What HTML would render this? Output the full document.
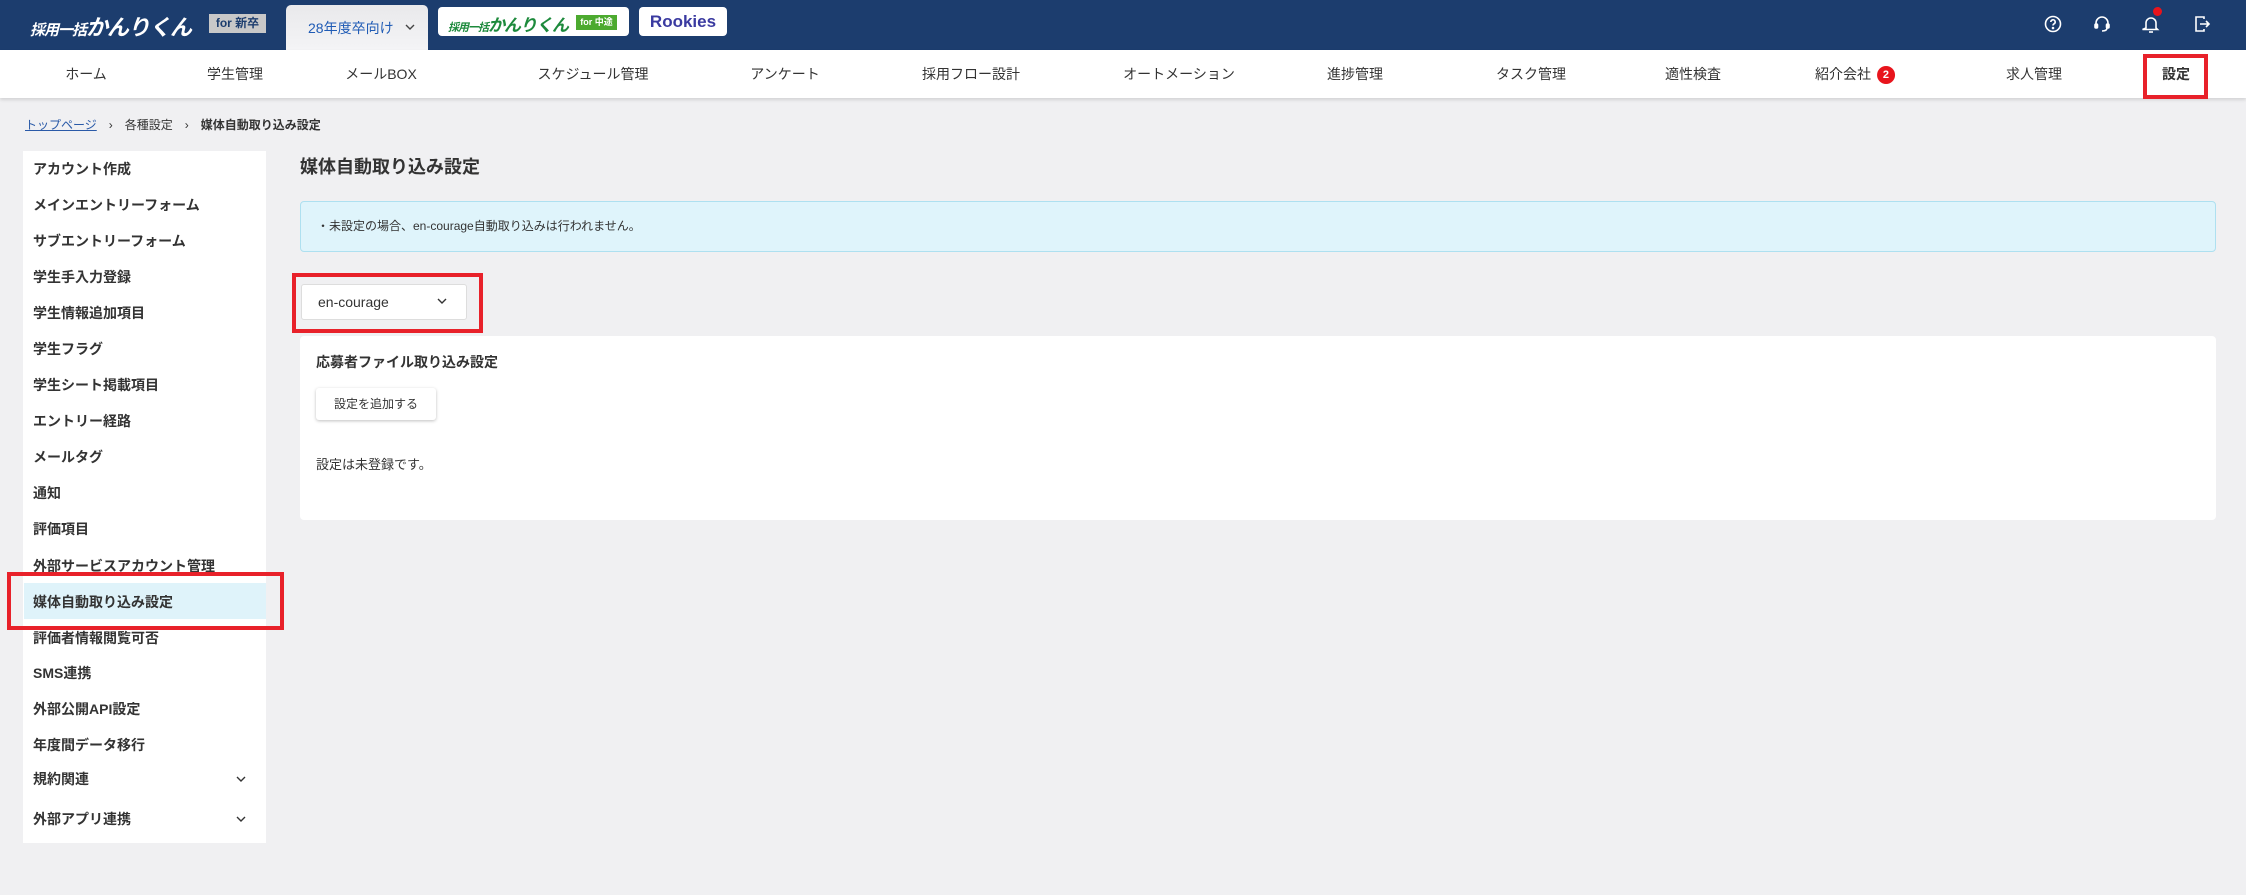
<!DOCTYPE html>
<html><head><meta charset="utf-8">
<style>
*{box-sizing:border-box;margin:0;padding:0}
body{width:2246px;height:895px;background:#f0f0f2;font-family:"Liberation Sans","Noto Sans CJK JP",sans-serif;color:#333;position:relative;overflow:hidden}
.a{position:absolute}
#hd{left:0;top:0;width:2246px;height:50px;background:#1c3d6e}
#nav{left:0;top:50px;width:2246px;height:48px;background:#fff;box-shadow:0 2px 3px rgba(0,0,0,.12)}
.ni{position:absolute;top:0;height:48px;line-height:48px;font-size:14px;color:#333;transform:translateX(-50%);white-space:nowrap}
.si{position:absolute;left:33px;font-size:14px;font-weight:bold;color:#333;transform:translateY(-50%);white-space:nowrap}
.red{position:absolute;border:4px solid #e8212a}
</style></head><body>
<div id="hd" class="a">
 <div class="a" style="left:30px;top:10px;font-size:22px;font-weight:bold;font-style:italic;color:#fff;letter-spacing:-1px;white-space:nowrap"><span style="font-size:15px">採用一括</span>かんりくん</div>
 <div class="a" style="left:209px;top:14px;width:57px;height:19px;background:#c8c8c8;color:#1c3d6e;font-size:12px;font-weight:bold;line-height:19px;text-align:center">for 新卒</div>
 <div class="a" style="left:286px;top:5px;width:142px;height:45px;background:linear-gradient(#e9e9eb,#f4f4f6);border-radius:5px 5px 0 0;color:#1f5bb5;font-size:14px;line-height:46px;padding-left:22px">28年度卒向け</div>
 <svg class="a" style="left:405px;top:24px" width="10" height="6" viewBox="0 0 10 6" fill="none" stroke="#444" stroke-width="1.4"><path d="M1 1l4 4 4-4"/></svg>
 <div class="a" style="left:438px;top:7px;width:191px;height:29px;background:#fff;border-radius:4px">
  <div class="a" style="left:10px;top:4px;font-size:17px;font-weight:bold;font-style:italic;color:#1d8a3c;white-space:nowrap;letter-spacing:-1px"><span style="font-size:11px">採用一括</span>かんりくん</div>
  <div class="a" style="left:138px;top:8px;width:41px;height:15px;background:#4caa2f;color:#fff;font-size:9px;font-weight:bold;text-align:center;line-height:15px">for 中途</div>
 </div>
 <div class="a" style="left:639px;top:7px;width:88px;height:29px;background:#fff;border-radius:4px;color:#3a3aa0;font-weight:bold;font-size:17px;text-align:center;line-height:29px">Rookies</div>
 <svg class="a" style="left:2044px;top:15px" width="18" height="18" viewBox="0 0 18 18" fill="none" stroke="#fff" stroke-width="1.6"><circle cx="9" cy="9" r="7.5"/><path d="M6.8 7a2.2 2.2 0 1 1 3 2c-.7.3-.8.8-.8 1.5"/><circle cx="9" cy="13" r=".5" fill="#fff"/></svg>
 <svg class="a" style="left:2093px;top:15px" width="18" height="18" viewBox="0 0 18 18" fill="none" stroke="#fff" stroke-width="1.6"><path d="M3 10V8a6 6 0 0 1 12 0v2"/><rect x="2" y="9" width="2.5" height="4" rx="1" fill="#fff"/><rect x="13.5" y="9" width="2.5" height="4" rx="1" fill="#fff"/><path d="M14 13c0 2-2 3-5 3"/></svg>
 <svg class="a" style="left:2142px;top:14px" width="18" height="20" viewBox="0 0 18 20" fill="none" stroke="#fff" stroke-width="1.6"><path d="M4 14V9a5 5 0 0 1 10 0v5l1.5 1.5h-15z"/><path d="M7 18h4"/></svg>
 <div class="a" style="left:2153px;top:7px;width:9px;height:9px;border-radius:50%;background:#e8141c"></div>
 <svg class="a" style="left:2193px;top:15px" width="18" height="18" viewBox="0 0 18 18" fill="none" stroke="#fff" stroke-width="1.6"><path d="M11 4V2H3v14h8v-2"/><path d="M7 9h9M13 6l3 3-3 3"/></svg>
</div>
<div id="nav" class="a">
 <div class="ni" style="left:86px">ホーム</div>
 <div class="ni" style="left:235px">学生管理</div>
 <div class="ni" style="left:381px">メールBOX</div>
 <div class="ni" style="left:593px">スケジュール管理</div>
 <div class="ni" style="left:785px">アンケート</div>
 <div class="ni" style="left:971px">採用フロー設計</div>
 <div class="ni" style="left:1179px">オートメーション</div>
 <div class="ni" style="left:1355px">進捗管理</div>
 <div class="ni" style="left:1531px">タスク管理</div>
 <div class="ni" style="left:1693px">適性検査</div>
 <div class="ni" style="left:1855px">紹介会社 <span style="display:inline-block;width:18px;height:18px;border-radius:50%;background:#e8141c;color:#fff;font-size:11px;font-weight:bold;line-height:18px;text-align:center;vertical-align:middle;margin-left:2px">2</span></div>
 <div class="ni" style="left:2034px">求人管理</div>
 <div class="ni" style="left:2176px;font-weight:bold">設定</div>
</div>
<div class="red" style="left:2143px;top:54px;width:65px;height:45px"></div>
<div class="a" style="left:25px;top:116px;font-size:12px;white-space:nowrap"><span style="color:#2a5aa8;text-decoration:underline">トップページ</span><span style="margin:0 12px">&#8250;</span>各種設定<span style="margin:0 12px">&#8250;</span><b>媒体自動取り込み設定</b></div>
<div class="a" style="left:23px;top:151px;width:243px;height:692px;background:#fff"></div>
<div class="a" style="left:24px;top:583px;width:242px;height:36px;background:#dff3fa"></div>
<div class="si" style="top:169px">アカウント作成</div>
<div class="si" style="top:205px">メインエントリーフォーム</div>
<div class="si" style="top:241px">サブエントリーフォーム</div>
<div class="si" style="top:277px">学生手入力登録</div>
<div class="si" style="top:313px">学生情報追加項目</div>
<div class="si" style="top:349px">学生フラグ</div>
<div class="si" style="top:385px">学生シート掲載項目</div>
<div class="si" style="top:421px">エントリー経路</div>
<div class="si" style="top:457px">メールタグ</div>
<div class="si" style="top:493px">通知</div>
<div class="si" style="top:529px">評価項目</div>
<div class="si" style="top:566px">外部サービスアカウント管理</div>
<div class="si" style="top:602px">媒体自動取り込み設定</div>
<div class="si" style="top:638px">評価者情報閲覧可否</div>
<div class="si" style="top:673px">SMS連携</div>
<div class="si" style="top:709px">外部公開API設定</div>
<div class="si" style="top:745px">年度間データ移行</div>
<div class="si" style="top:779px">規約関連</div>
<div class="si" style="top:819px">外部アプリ連携</div>
<svg class="a" style="left:236px;top:776px" width="10" height="6" viewBox="0 0 10 6" fill="none" stroke="#333" stroke-width="1.4"><path d="M1 1l4 4 4-4"/></svg>
<svg class="a" style="left:236px;top:816px" width="10" height="6" viewBox="0 0 10 6" fill="none" stroke="#333" stroke-width="1.4"><path d="M1 1l4 4 4-4"/></svg>
<div class="red" style="left:7px;top:572px;width:277px;height:58px"></div>
<div class="a" style="left:300px;top:153px;font-size:18px;font-weight:bold;color:#333">媒体自動取り込み設定</div>
<div class="a" style="left:300px;top:201px;width:1916px;height:51px;background:#dff4fb;border:1px solid #aee0f0;border-radius:4px;font-size:12px;line-height:49px;padding-left:16px">・未設定の場合、en-courage自動取り込みは行われません。</div>
<div class="a" style="left:301px;top:284px;width:166px;height:36px;background:#fff;border:1px solid #ddd;border-radius:3px;font-size:14px;line-height:34px;padding-left:16px">en-courage</div>
<svg class="a" style="left:437px;top:298px" width="10" height="6" viewBox="0 0 10 6" fill="none" stroke="#333" stroke-width="1.4"><path d="M1 1l4 4 4-4"/></svg>
<div class="red" style="left:292px;top:273px;width:191px;height:60px"></div>
<div class="a" style="left:300px;top:336px;width:1916px;height:184px;background:#fff;border-radius:4px"></div>
<div class="a" style="left:316px;top:352px;font-size:14px;font-weight:bold">応募者ファイル取り込み設定</div>
<div class="a" style="left:316px;top:388px;width:120px;height:32px;background:#fff;border-radius:3px;box-shadow:0 1px 3px rgba(0,0,0,.25);font-size:12px;line-height:32px;text-align:center">設定を追加する</div>
<div class="a" style="left:316px;top:454px;font-size:13px">設定は未登録です。</div>
</body></html>
